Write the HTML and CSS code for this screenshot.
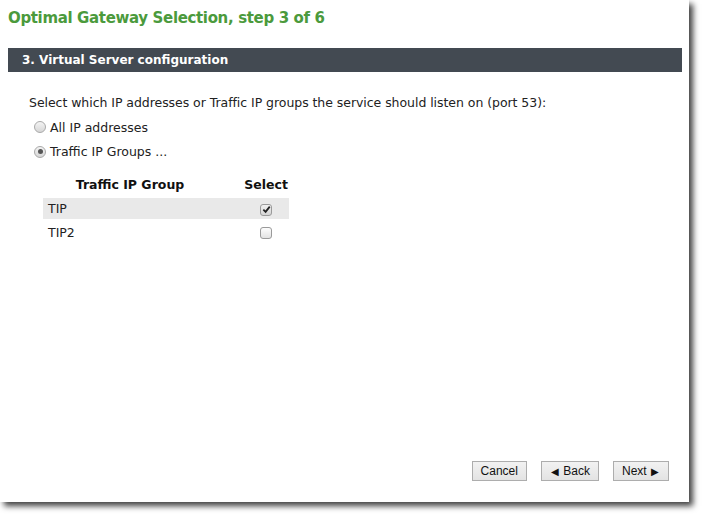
FILE: index.html
```html
<!DOCTYPE html>
<html>
<head>
<meta charset="utf-8">
<link rel="stylesheet" href="styles.css">
</head>
<body>
<div class="panel">
  <h1 class="title">Optimal Gateway Selection, step 3 of 6</h1>
  <div class="bar">3. Virtual Server configuration</div>
  <div class="content">
    <p class="intro">Select which IP addresses or Traffic IP groups the service should listen on (port 53):</p>
    <div class="radio-row"><span class="radio"></span><span>All IP addresses</span></div>
    <div class="radio-row"><span class="radio checked"></span><span>Traffic IP Groups ...</span></div>
    <table class="tips">
      <thead>
        <tr><th class="c-name">Traffic IP Group</th><th class="c-sel">Select</th></tr>
      </thead>
      <tbody>
        <tr class="alt"><td>TIP</td><td class="c-box"><span class="cb checked"><svg viewBox="0 0 10 10" width="9" height="9"><path d="M1.5 5.2 L4 7.6 L8.6 1.8" fill="none" stroke="#222" stroke-width="2"/></svg></span></td></tr>
        <tr class="plain"><td>TIP2</td><td class="c-box"><span class="cb"></span></td></tr>
      </tbody>
    </table>
  </div>
  <div class="buttons">
    <button class="btn">Cancel</button>
    <button class="btn"><span class="tri">&#9664;</span> Back</button>
    <button class="btn">Next <span class="tri">&#9654;</span></button>
  </div>
</div>
</body>
</html>
```
FILE: styles.css
```css
html, body {
  margin: 0;
  padding: 0;
  background: #ffffff;
}
body {
  padding-bottom: 12px;
}
.panel {
  width: 689px;
  height: 502px;
  background: #ffffff;
  box-shadow: 4px 4px 6px rgba(0, 0, 0, 0.75);
  font-family: "DejaVu Sans", Verdana, sans-serif;
  color: #222;
  display: flex;
  flex-direction: column;
  box-sizing: border-box;
  padding: 0 7px 0 8px;
}
.title {
  margin: 9px 0 0 0;
  font-size: 15px;
  letter-spacing: -0.35px;
  line-height: 19px;
  font-weight: bold;
  color: #4b9a3c;
}
.bar {
  margin-top: 20px;
  height: 24px;
  background: #434a52;
  color: #ffffff;
  font-weight: bold;
  font-size: 12px;
  line-height: 24px;
  padding-left: 14px;
}
.content {
  padding-left: 21px;
  font-size: 12.5px;
  flex: 1;
}
.intro {
  margin: 22px 0 3px 0;
  line-height: 18px;
  letter-spacing: -0.05px;
}
.radio-row {
  display: flex;
  align-items: center;
  gap: 4px;
  height: 24.5px;
  margin-left: 5px;
}
.radio {
  width: 12px;
  height: 12px;
  border-radius: 50%;
  border: 1px solid #a9a9a9;
  background: linear-gradient(#f4f4f4, #d6d6d6);
  box-sizing: border-box;
  position: relative;
}
.radio.checked::after {
  content: "";
  position: absolute;
  left: 2.5px;
  top: 2.5px;
  width: 5px;
  height: 5px;
  border-radius: 50%;
  background: #555;
}
.tips {
  margin-top: 10px;
  margin-left: 14px;
  border-collapse: collapse;
  width: 246px;
}
.tips th {
  font-weight: bold;
  font-size: 12.5px;
  color: #111;
  height: 20px;
  padding: 0 0 1px 0;
  border-bottom: 2px solid #222;
}
.tips th.c-name {
  text-align: center;
  width: 174px;
}
.tips th.c-sel {
  text-align: right;
  padding-right: 1px;
}
.tips tr.alt td {
  border-top: 3px solid #fff;
  background: #e9e9e9;
  height: 21px;
}
.tips td {
  padding: 0 0 0 5px;
  font-size: 12.5px;
  color: #222;
}
.tips tr.plain td {
  height: 26px;
}
.tips td.c-box {
  text-align: right;
  padding-right: 17px;
}
.cb {
  display: inline-flex;
  align-items: center;
  justify-content: center;
  width: 12px;
  height: 12px;
  box-sizing: border-box;
  border: 1px solid #9a9a9a;
  border-radius: 3px;
  background: linear-gradient(#fdfdfd, #e2e2e2);
  vertical-align: middle;
}
.cb.checked {
  background: linear-gradient(#f0f0f0, #d4d4d4);
}
.buttons {
  display: flex;
  justify-content: flex-end;
  gap: 14px;
  padding-right: 13px;
  margin-bottom: 21px;
}
.btn {
  font-family: "Liberation Sans", Arial, sans-serif;
  font-size: 12px;
  height: 20px;
  padding: 0 8px;
  border: 1px solid #adadad;
  background: linear-gradient(#f2f2f2, #e3e3e3);
  color: #111;
  border-radius: 0;
}
.tri {
  font-size: 10px;
  margin: 0 1px;
}
```
